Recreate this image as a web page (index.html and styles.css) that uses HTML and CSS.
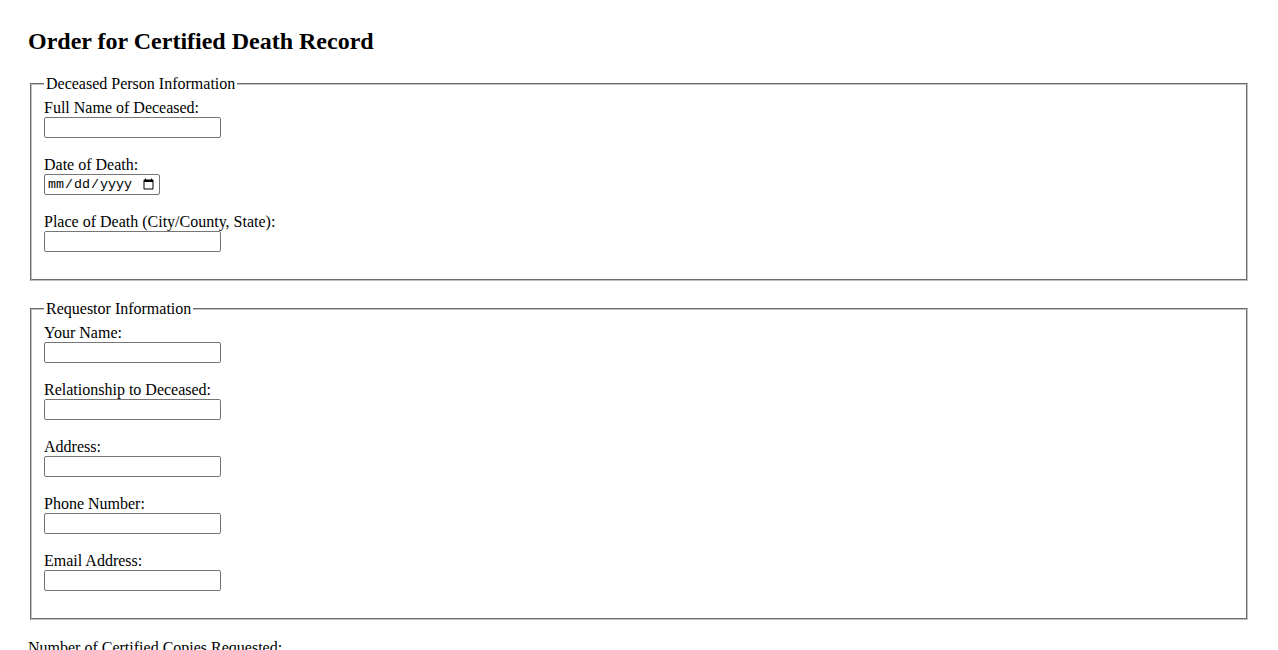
FILE: index.html
```html
<!DOCTYPE html>
<html lang="en">
<head>
<meta charset="utf-8">
<title>Order for Certified Death Record</title>
<link rel="stylesheet" href="styles.css">
</head>
<body>
<h2 class="title">Order for Certified Death Record</h2>
<form class="order-form">
  <fieldset class="group">
    <legend class="group-legend">Deceased Person Information</legend>
    <div class="field">
      <label class="field-label" for="deceased-name">Full Name of Deceased:</label>
      <input class="text-input" type="text" id="deceased-name">
    </div>
    <div class="field">
      <label class="field-label" for="death-date">Date of Death:</label>
      <input class="date-input" type="date" id="death-date">
    </div>
    <div class="field">
      <label class="field-label" for="death-place">Place of Death (City/County, State):</label>
      <input class="text-input" type="text" id="death-place">
    </div>
  </fieldset>
  <fieldset class="group">
    <legend class="group-legend">Requestor Information</legend>
    <div class="field">
      <label class="field-label" for="req-name">Your Name:</label>
      <input class="text-input" type="text" id="req-name">
    </div>
    <div class="field">
      <label class="field-label" for="req-rel">Relationship to Deceased:</label>
      <input class="text-input" type="text" id="req-rel">
    </div>
    <div class="field">
      <label class="field-label" for="req-addr">Address:</label>
      <input class="text-input" type="text" id="req-addr">
    </div>
    <div class="field">
      <label class="field-label" for="req-phone">Phone Number:</label>
      <input class="text-input" type="tel" id="req-phone">
    </div>
    <div class="field">
      <label class="field-label" for="req-email">Email Address:</label>
      <input class="text-input" type="email" id="req-email">
    </div>
  </fieldset>
  <div class="field">
    <label class="field-label" for="copies">Number of Certified Copies Requested:</label>
    <input class="number-input" type="number" id="copies" min="1" value="1">
  </div>
</form>
</body>
</html>
```

FILE: styles.css
```css
html, body {
  background: #ffffff;
}
body {
  margin: 8px;
  padding: 20px;
  font-family: "Liberation Serif", "Times New Roman", serif;
  font-size: 16px;
  color: #000000;
}
.title {
  margin: 0 0 20px;
  font-size: 24px;
  font-weight: bold;
  line-height: 27px;
}
.order-form {
  margin: 0;
}
.group {
  margin: 0 2px 19px;
  padding: 6px 12px 9px;
  border: 2px groove #c0c0c0;
}
.group-legend {
  padding: 0 2px;
  line-height: 18px;
}
.field {
  margin-bottom: 18px;
}
.field-label {
  display: block;
  line-height: 18px;
}
.text-input,
.number-input {
  display: block;
  box-sizing: border-box;
  width: 177px;
  height: 21px;
  margin: 0;
  padding: 1px 2px;
  border: 1px solid #767676;
  border-radius: 2px;
  font-family: Arial, "Liberation Sans", sans-serif;
  font-size: 13.333px;
  background: #ffffff;
}
.date-input {
  display: block;
  box-sizing: border-box;
  width: 116px;
  height: 21px;
  margin: 0;
  padding: 1px 2px;
  border: 1px solid #767676;
  border-radius: 2px;
  font-family: "Liberation Mono", monospace;
  font-size: 13.333px;
  background: #ffffff;
}
```
